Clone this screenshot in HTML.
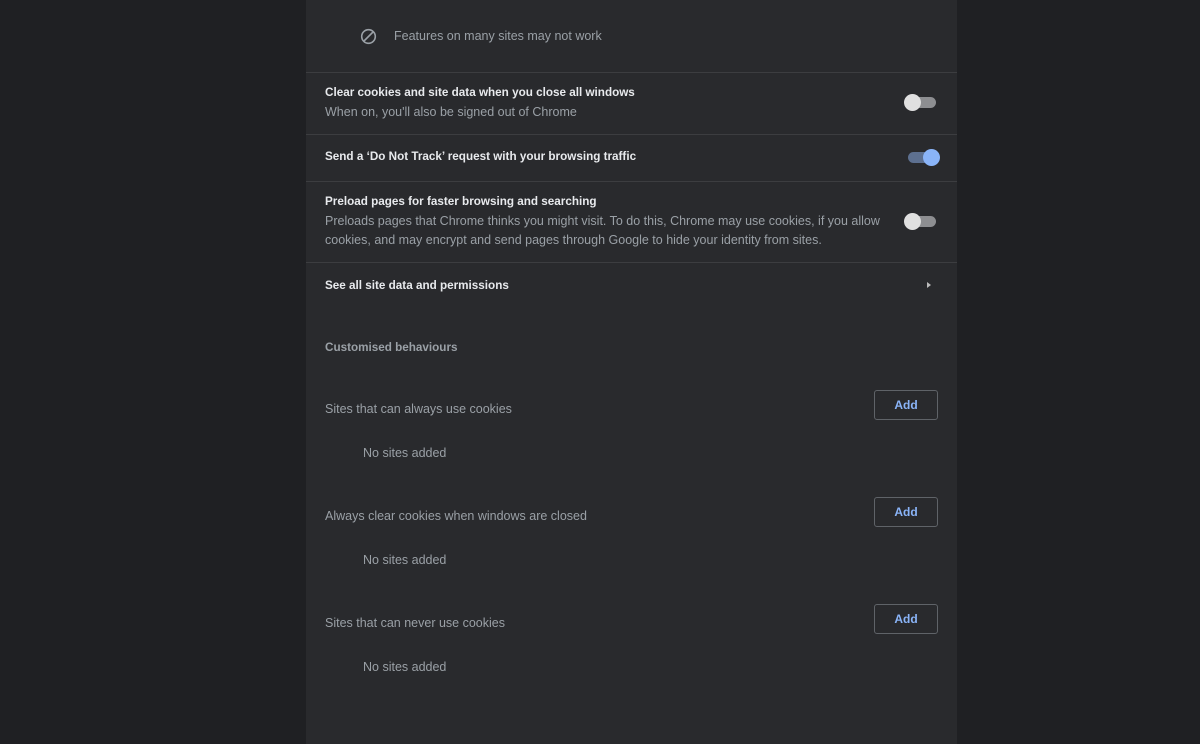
<!DOCTYPE html>
<html><head><style>
body{margin:0;width:1200px;height:744px;background:#1f2023;font-family:"Liberation Sans",sans-serif;overflow:hidden;position:relative}
.p{position:absolute;left:306px;top:0;width:651px;height:744px;background:#292a2d}
.t{position:absolute;font-size:12.5px;white-space:nowrap}
.b{color:#e8eaed;font-weight:bold;font-size:11.7px}
.s{color:#9aa0a6}
.h{position:absolute;left:0;width:651px;height:1px;background:#3c3d40}
.tg{position:absolute;width:30px;height:11px;border-radius:6px;background:#8d8e91}
.tg i{position:absolute;top:-3px;width:17px;height:17px;border-radius:50%;background:#e0e0e0}
.btn{position:absolute;left:568px;width:64px;height:30px;border:1px solid #5f6368;border-radius:3px;box-sizing:border-box;color:#8ab4f8;font-weight:bold;font-size:12px;text-align:center;line-height:28px}
</style></head><body><div class="p">
<svg style="position:absolute;left:54px;top:28px" width="17" height="17" viewBox="0 0 17 17"><circle cx="8.5" cy="8.5" r="6.8" fill="none" stroke="#9aa0a6" stroke-width="1.6"/><line x1="4" y1="13" x2="13" y2="4" stroke="#9aa0a6" stroke-width="1.6"/></svg>
<div class="t s" style="left:88px;top:29px">Features on many sites may not work</div>
<div class="h" style="top:72px"></div>
<div class="t b" style="left:19px;top:86px">Clear cookies and site data when you close all windows</div>
<div class="t s" style="left:19px;top:105px">When on, you'll also be signed out of Chrome</div>
<div class="tg" style="left:600px;top:97px"><i style="left:-2px"></i></div>
<div class="h" style="top:134px"></div>
<div class="t b" style="left:19px;top:150px">Send a ‘Do Not Track’ request with your browsing traffic</div>
<div class="tg" style="left:602px;top:152px;background:#5d7090"><i style="left:15px;background:#8ab4f8"></i></div>
<div class="h" style="top:181px"></div>
<div class="t b" style="left:19px;top:195px">Preload pages for faster browsing and searching</div>
<div class="t s" style="left:19px;top:214px">Preloads pages that Chrome thinks you might visit. To do this, Chrome may use cookies, if you allow</div>
<div class="t s" style="left:19px;top:233px">cookies, and may encrypt and send pages through Google to hide your identity from sites.</div>
<div class="tg" style="left:600px;top:216px"><i style="left:-2px"></i></div>
<div class="h" style="top:262px"></div>
<div class="t b" style="left:19px;top:279px">See all site data and permissions</div>
<div style="position:absolute;left:621px;top:282px;border-left:4px solid #bbb;border-top:3.5px solid transparent;border-bottom:3.5px solid transparent"></div>
<div class="t s" style="left:19px;top:341px;font-weight:bold;font-size:11.7px">Customised behaviours</div>
<div class="t s" style="left:19px;top:402px">Sites that can always use cookies</div>
<div class="btn" style="top:390px">Add</div>
<div class="t s" style="left:57px;top:446px">No sites added</div>
<div class="t s" style="left:19px;top:509px">Always clear cookies when windows are closed</div>
<div class="btn" style="top:497px">Add</div>
<div class="t s" style="left:57px;top:553px">No sites added</div>
<div class="t s" style="left:19px;top:616px">Sites that can never use cookies</div>
<div class="btn" style="top:604px">Add</div>
<div class="t s" style="left:57px;top:660px">No sites added</div>
</div></body></html>
